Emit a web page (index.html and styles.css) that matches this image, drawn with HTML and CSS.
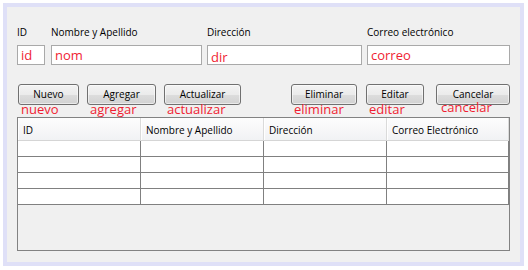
FILE: index.html
```html
<!DOCTYPE html>
<html lang="es">
<head>
<meta charset="utf-8">
<title>Formulario</title>
<link rel="stylesheet" href="styles.css">
</head>
<body>
<div class="frame">
  <div class="panel">
    <div class="fields">
      <div class="field f-id">
        <label class="lbl">ID</label>
        <input class="txt" type="text" value="id">
      </div>
      <div class="field f-nom">
        <label class="lbl">Nombre y Apellido</label>
        <input class="txt" type="text" value="nom">
      </div>
      <div class="field f-dir">
        <label class="lbl">Dirección</label>
        <input class="txt txt-low" type="text" value="dir">
      </div>
      <div class="field f-correo">
        <label class="lbl">Correo electrónico</label>
        <input class="txt" type="text" value="correo">
      </div>
    </div>

    <div class="actions">
      <div class="cluster">
        <div class="act w-nuevo"><button class="btn">Nuevo</button><span class="tag">nuevo</span></div>
        <div class="act w-agregar"><button class="btn">Agregar</button><span class="tag">agregar</span></div>
        <div class="act w-actualizar"><button class="btn">Actualizar</button><span class="tag">actualizar</span></div>
      </div>
      <div class="cluster cluster-right">
        <div class="act w-eliminar"><button class="btn">Eliminar</button><span class="tag">eliminar</span></div>
        <div class="act w-editar"><button class="btn">Editar</button><span class="tag">editar</span></div>
        <div class="act w-cancelar"><button class="btn">Cancelar</button><span class="tag tag-up">cancelar</span></div>
      </div>
    </div>

    <div class="tablebox">
      <div class="grid">
        <div class="th">ID</div>
        <div class="th">Nombre y Apellido</div>
        <div class="th">Dirección</div>
        <div class="th">Correo Electrónico</div>

        <div class="td"></div><div class="td"></div><div class="td"></div><div class="td"></div>
        <div class="td"></div><div class="td"></div><div class="td"></div><div class="td"></div>
        <div class="td"></div><div class="td"></div><div class="td"></div><div class="td"></div>
        <div class="td"></div><div class="td"></div><div class="td"></div><div class="td"></div>
      </div>
    </div>
  </div>
</div>
</body>
</html>
```

FILE: styles.css
```css
* { box-sizing: border-box; }

html, body {
  margin: 0;
  padding: 0;
  background: #ffffff;
}

body {
  font-family: "Open Sans", "Noto Sans", sans-serif;
  font-size: 10px;
  color: #000;
}

.frame {
  margin: 3px;
  width: 521px;
  height: 263px;
  border: 4px solid #dfe0f7;
}

.panel {
  width: 513px;
  height: 255px;
  background: #f0f0f0;
  padding: 18px 0 0 10px;
}

/* ---------- fields ---------- */
.fields {
  display: flex;
  gap: 5px;
}

.field {
  display: flex;
  flex-direction: column;
}

.f-id { width: 28px; margin-right: 1px; }
.f-nom { width: 151px; }
.f-dir { width: 155px; }
.f-correo { width: 143px; }

.lbl {
  display: block;
  height: 14px;
  line-height: 14px;
  white-space: nowrap;
  font-size: 10px;
}

.txt {
  display: block;
  margin: 6px 0 0 0;
  width: 100%;
  height: 20px;
  border: 1px solid #a9a9a9;
  background: #fff;
  padding: 0 0 0 3px;
  font-family: "Open Sans", "Noto Sans", sans-serif;
  font-size: 13px;
  color: #f01d32;
  outline: none;
}

.txt-low { padding-top: 3px; }

/* ---------- actions ---------- */
.actions {
  display: flex;
  justify-content: space-between;
  margin-top: 19px;
  margin-left: 1px;
  width: 492px;
}

.cluster {
  display: flex;
  gap: 8px;
}

.cluster-right { gap: 9px; }
.cluster-right .w-cancelar { margin-left: 3px; }

.act {
  display: flex;
  flex-direction: column;
}

.w-nuevo { width: 61px; }
.w-agregar { width: 69px; }
.w-actualizar { width: 77px; }
.w-eliminar { width: 66px; }
.w-editar { width: 58px; }
.w-cancelar { width: 74px; }

.btn {
  display: block;
  width: 100%;
  height: 21px;
  padding: 0;
  border: 1px solid #707070;
  border-radius: 3px;
  background: linear-gradient(#f3f3f3 0%, #ebebeb 50%, #dddddd 50%, #d2d2d2 100%);
  box-shadow: inset 0 0 0 1px rgba(255, 255, 255, 0.55);
  font-family: "Open Sans", "Noto Sans", sans-serif;
  font-size: 10px;
  line-height: 19px;
  color: #000;
  text-align: center;
}

.tag {
  display: block;
  height: 14px;
  margin-top: -3px;
  padding-left: 3px;
  line-height: 14px;
  font-size: 13px;
  color: #f01d32;
  white-space: nowrap;
  position: relative;
}

.tag-up { top: -2px; padding-left: 5px; }

/* ---------- table ---------- */
.tablebox {
  margin-top: 1px;
  width: 493px;
  height: 134px;
  border: 1px solid #828282;
  background: #f0f0f0;
}

.grid {
  display: grid;
  grid-template-columns: 123px 123px 123px 122px;
}

.th {
  height: 23px;
  padding: 3px 0 0 5px;
  line-height: 19px;
  font-size: 10px;
  white-space: nowrap;
  background: linear-gradient(#fdfdfd, #f1f2f4);
  border-right: 1px solid #dadada;
  border-bottom: 1px solid #d5d5d5;
  box-shadow: inset 1px 0 0 #ffffff;
}

.td {
  height: 16px;
  background: #ffffff;
  border-right: 1px solid #808080;
  border-bottom: 1px solid #808080;
}
```
